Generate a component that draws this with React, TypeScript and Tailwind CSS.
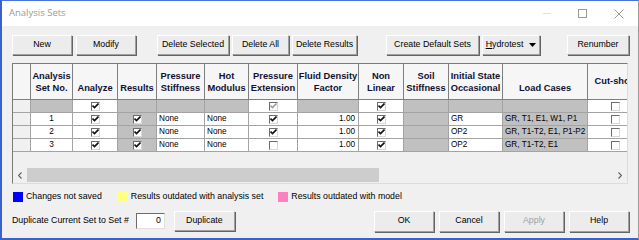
import React from "react";

const cols = [18, 42, 45, 39, 48, 44, 49, 61, 45, 45, 54, 85, 56];

const headers: { l1?: string; l2: string; mid?: boolean }[] = [
  { l2: "" },
  { l1: "Analysis", l2: "Set No." },
  { l2: "Analyze" },
  { l2: "Results" },
  { l1: "Pressure", l2: "Stiffness" },
  { l1: "Hot", l2: "Modulus" },
  { l1: "Pressure", l2: "Extension" },
  { l1: "Fluid Density", l2: "Factor" },
  { l1: "Non", l2: "Linear" },
  { l1: "Soil", l2: "Stiffness" },
  { l1: "Initial State", l2: "Occasional" },
  { l2: "Load Cases" },
  { l2: "Cut-short", mid: true },
];

type Cell =
  | { t: "g" }
  | { t: "w" }
  | { t: "h" }
  | { t: "txt"; v: string; a: "l" | "c" | "r"; g?: boolean }
  | { t: "chk"; on: boolean; g?: boolean; dis?: boolean };

const rows: Cell[][] = [
  [
    { t: "h" }, { t: "g" }, { t: "chk", on: true }, { t: "g" }, { t: "g" }, { t: "g" },
    { t: "chk", on: true, dis: true }, { t: "g" }, { t: "chk", on: true }, { t: "g" }, { t: "g" }, { t: "g" },
    { t: "chk", on: false },
  ],
  [
    { t: "h" }, { t: "txt", v: "1", a: "c" }, { t: "chk", on: true }, { t: "chk", on: true, g: true },
    { t: "txt", v: "None", a: "l" }, { t: "txt", v: "None", a: "l" }, { t: "chk", on: true },
    { t: "txt", v: "1.00", a: "r" }, { t: "chk", on: true }, { t: "g" }, { t: "txt", v: "GR", a: "l" },
    { t: "txt", v: "GR, T1, E1, W1, P1", a: "l", g: true }, { t: "chk", on: false },
  ],
  [
    { t: "h" }, { t: "txt", v: "2", a: "c" }, { t: "chk", on: true }, { t: "chk", on: true, g: true },
    { t: "txt", v: "None", a: "l" }, { t: "txt", v: "None", a: "l" }, { t: "chk", on: true },
    { t: "txt", v: "1.00", a: "r" }, { t: "chk", on: true }, { t: "g" }, { t: "txt", v: "OP2", a: "l" },
    { t: "txt", v: "GR, T1-T2, E1, P1-P2", a: "l", g: true }, { t: "chk", on: false },
  ],
  [
    { t: "h" }, { t: "txt", v: "3", a: "c" }, { t: "chk", on: true }, { t: "chk", on: true, g: true },
    { t: "txt", v: "None", a: "l" }, { t: "txt", v: "None", a: "l" }, { t: "chk", on: false },
    { t: "txt", v: "1.00", a: "r" }, { t: "chk", on: true }, { t: "g" }, { t: "txt", v: "OP2", a: "l" },
    { t: "txt", v: "GR, T1-T2, E1", a: "l", g: true }, { t: "chk", on: false },
  ],
];

const Check = ({ on, dis }: { on: boolean; dis?: boolean }) => (
  <span className="flex h-[9px] w-[9px] items-center justify-center border border-t-[#6d6d6d] border-l-[#6d6d6d] border-r-[#d8d8d8] border-b-[#d8d8d8] bg-white">
    {on && (
      <svg width="7" height="6" viewBox="0 0 7 6">
        <path d="M0.5 2.5 L2.5 4.5 L6.5 0.5" stroke={dis ? "#a0a0a0" : "#111"} strokeWidth="1.6" fill="none" />
      </svg>
    )}
  </span>
);

const Btn = ({ w, children, dis }: { w: string; children: React.ReactNode; dis?: boolean }) => (
  <div
    className={`flex items-center justify-center border border-t-white border-l-white border-r-[#a0a0a0] border-b-[#a0a0a0] bg-[#ececec] shadow-[1px_1px_0_#646464] ${w} ${dis ? "text-[#a0a0a0]" : "text-black"}`}
  >
    {children}
  </div>
);

const GridCell = ({ c, w }: { c: Cell; w: number }) => {
  const base = "flex h-[13px] shrink-0 items-center border-r border-b border-[#a3a3a3] overflow-hidden";
  let cls = "bg-white";
  if (c.t === "g" || (c.t === "txt" && c.g) || (c.t === "chk" && c.g)) cls = "bg-[#c0c0c0]";
  if (c.t === "h") cls = "bg-[#f0f0f0]";
  let align = "justify-center";
  if (c.t === "txt") align = c.a === "l" ? "justify-start pl-[2px]" : c.a === "r" ? "justify-end pr-[3px]" : "justify-center";
  return (
    <div className={`${base} ${cls} ${align}`} style={{ width: w }}>
      {c.t === "txt" && <span className="whitespace-nowrap text-[8.2px] leading-[12px]">{c.v}</span>}
      {c.t === "chk" && <Check on={c.on} dis={c.dis} />}
    </div>
  );
};

export default function App() {
  return (
    <div className="flex h-[240px] w-[639px] flex-col overflow-hidden border-t border-l-2 border-b-2 border-r border-t-[#4a72d8] border-l-[#3a62cc] border-b-[#3a62cc] border-r-[#9a9a9a] bg-[#f0f0f0] font-['Liberation_Sans',Arial,sans-serif] text-[8.8px] text-black">
      {/* title bar */}
      <div className="flex h-[25px] shrink-0 items-center bg-white pl-[7px]">
        <span className="font-['Open_Sans',sans-serif] text-[9.5px] text-[#9a9a9a]">Analysis Sets</span>
        <div className="ml-auto flex items-center">
          <span className="mr-[27px] h-px w-[8px] bg-[#e0e0e0]" />
          <span className="h-[9px] w-[9px] border border-[#9a9a9a]" />
          <svg className="ml-[27px] mr-[14px]" width="10" height="10" viewBox="0 0 10 10">
            <path d="M0.5 0.5 L9.5 9.5 M9.5 0.5 L0.5 9.5" stroke="#9a9a9a" strokeWidth="1" />
          </svg>
        </div>
      </div>

      <div className="flex flex-col pl-[10px] pr-[9px]">
        {/* toolbar */}
        <div className="mt-[9px] flex h-[20px] items-stretch">
          <Btn w="w-[60px]">New</Btn>
          <div className="ml-[4px]"><Btn w="w-[60px] h-full">Modify</Btn></div>
          <div className="ml-[21px]"><Btn w="w-[72px] h-full">Delete Selected</Btn></div>
          <div className="ml-[3px]"><Btn w="w-[57px] h-full">Delete All</Btn></div>
          <div className="ml-[3px]"><Btn w="w-[65px] h-full">Delete Results</Btn></div>
          <div className="ml-[29px]"><Btn w="w-[93px] h-full">Create Default Sets</Btn></div>
          <div className="ml-[3px]">
            <Btn w="w-[58px] h-full">
              <span>
                <span className="underline">H</span>ydrotest
              </span>
              <svg className="ml-[6px]" width="7" height="4" viewBox="0 0 7 4">
                <path d="M0 0 L7 0 L3.5 4 Z" fill="#000" />
              </svg>
            </Btn>
          </div>
          <div className="ml-auto"><Btn w="w-[62px] h-full">Renumber</Btn></div>
        </div>

        {/* grid */}
        <div className="mt-[8px] flex h-[121px] w-[616px] flex-col overflow-hidden border border-t-[#7a7a7a] border-l-[#7a7a7a] border-r-[#dcdcdc] border-b-[#dcdcdc] bg-[#f0f0f0]">
          <div className="flex w-[614px] flex-col overflow-hidden">
            <div className="flex">
              {headers.map((h, i) => (
                <div
                  key={i}
                  className={`flex h-[36px] shrink-0 flex-col items-center border-r border-b border-[#7f7f7f] bg-[#f6f6f6] text-center text-[9.3px] font-bold leading-[12px] text-[#111133] ${h.mid ? "justify-center pb-[2px]" : "justify-end pb-[5px]"}`}
                  style={{ width: cols[i] }}
                >
                  {h.l1 && <span className="whitespace-nowrap">{h.l1}</span>}
                  <span className="whitespace-nowrap">{h.l2}</span>
                </div>
              ))}
            </div>
            {rows.map((r, ri) => (
              <div key={ri} className="flex">
                {r.map((c, ci) => (
                  <GridCell key={ci} c={c} w={cols[ci]} />
                ))}
              </div>
            ))}
          </div>
          <div className="flex-1" />
          {/* horizontal scrollbar */}
          <div className="flex h-[16px] items-stretch bg-[#f0f0f0]">
            <div className="flex w-[14px] items-center justify-center">
              <svg width="4" height="7" viewBox="0 0 4 7">
                <path d="M3.5 0.5 L0.5 3.5 L3.5 6.5" stroke="#606060" strokeWidth="1.2" fill="none" />
              </svg>
            </div>
            <div className="my-[1px] w-[352px] bg-[#cdcdcd]" />
            <div className="flex-1" />
            <div className="flex w-[14px] items-center justify-center">
              <svg width="4" height="7" viewBox="0 0 4 7">
                <path d="M0.5 0.5 L3.5 3.5 L0.5 6.5" stroke="#606060" strokeWidth="1.2" fill="none" />
              </svg>
            </div>
          </div>
        </div>

        {/* legend */}
        <div className="mt-[8px] flex h-[10px] items-center">
          <span className="ml-[1px] h-[10px] w-[10px] bg-[#0000ff]" />
          <span className="ml-[3px]">Changes not saved</span>
          <span className="ml-[16px] h-[10px] w-[10px] bg-[#ffff80]" />
          <span className="ml-[3px]">Results outdated with analysis set</span>
          <span className="ml-[15px] h-[10px] w-[10px] bg-[#ff80c0]" />
          <span className="ml-[3px]">Results outdated with model</span>
        </div>

        {/* bottom row */}
        <div className="mt-[8px] flex h-[22px] items-center">
          <span className="whitespace-nowrap">Duplicate Current Set to Set #</span>
          <div className="ml-[7px] flex h-[16px] w-[29px] items-center justify-end border border-t-[#6d6d6d] border-l-[#6d6d6d] border-r-[#e0e0e0] border-b-[#e0e0e0] bg-white pr-[3px]">
            0
          </div>
          <div className="ml-[9px] h-[20px]"><Btn w="w-[61px] h-full">Duplicate</Btn></div>
          <div className="ml-auto flex h-[21px] gap-[5px]">
            <Btn w="w-[60px] h-full">OK</Btn>
            <Btn w="w-[60px] h-full">Cancel</Btn>
            <Btn w="w-[60px] h-full" dis>Apply</Btn>
            <Btn w="w-[60px] h-full">Help</Btn>
          </div>
        </div>
      </div>
    </div>
  );
}
